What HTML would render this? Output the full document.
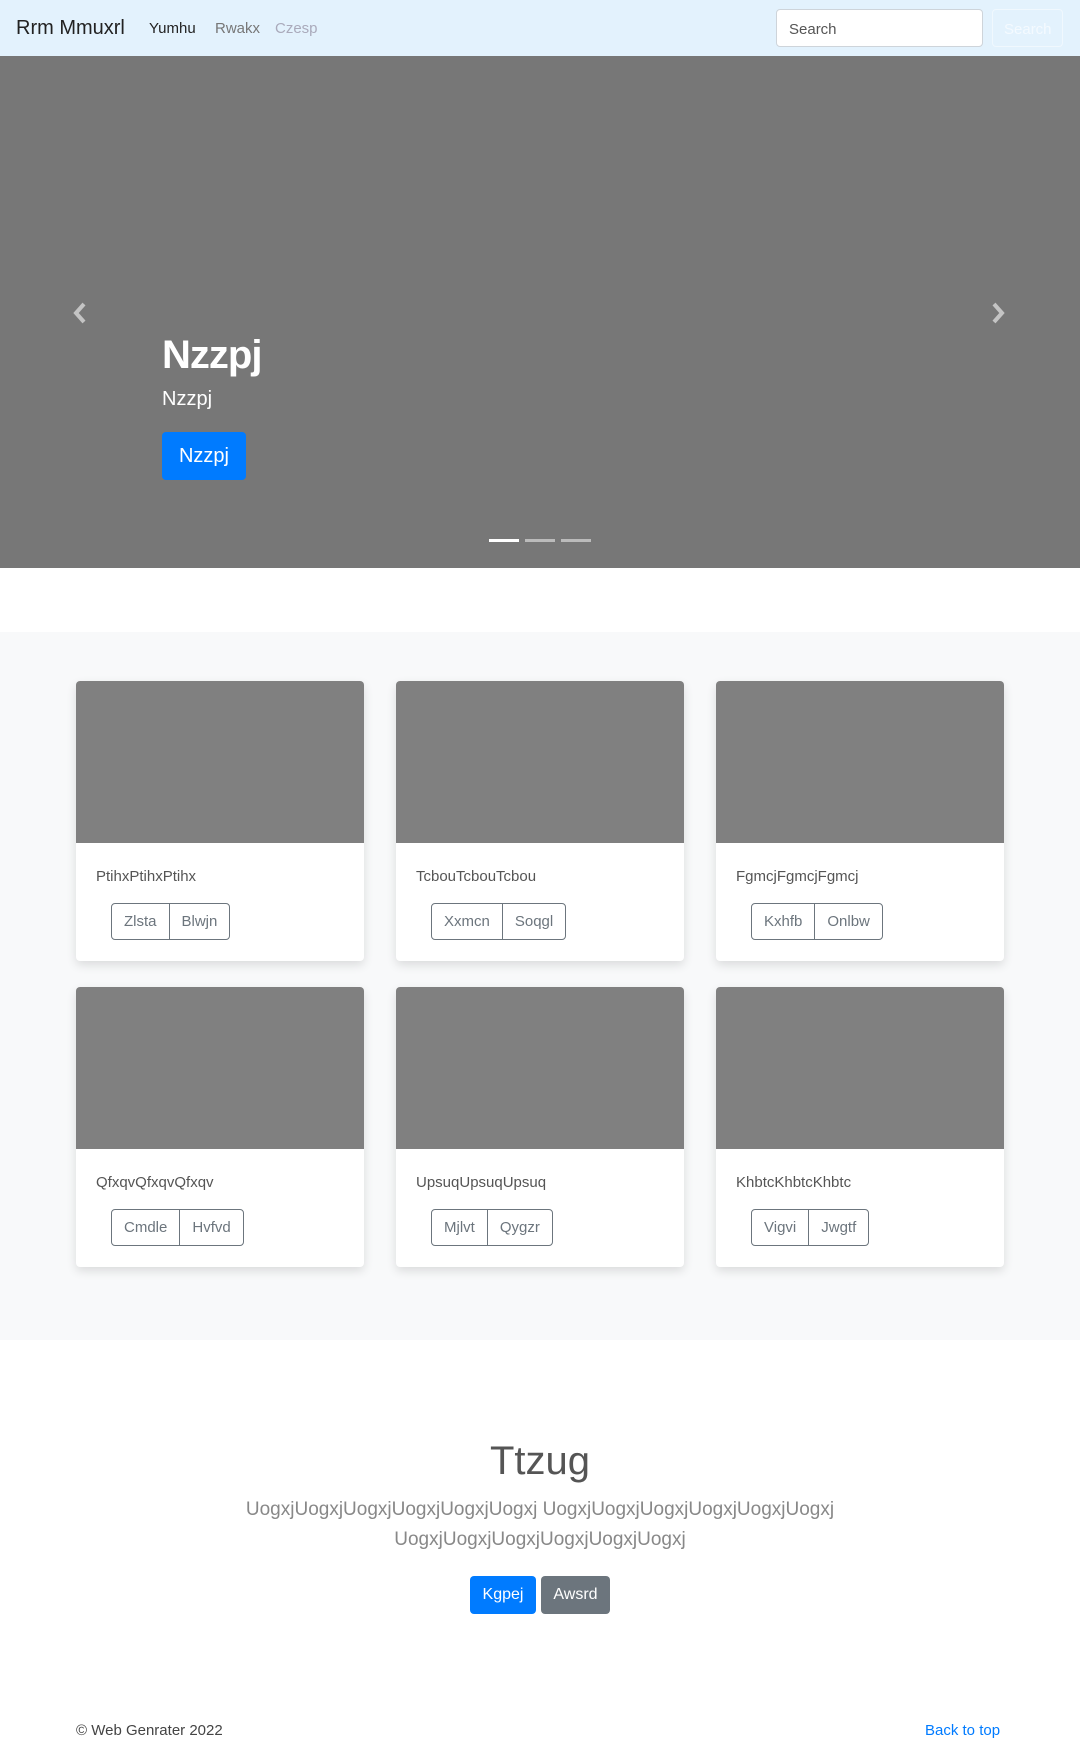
<!DOCTYPE html>
<html><head><meta charset="utf-8"><style>
*{box-sizing:border-box;margin:0;padding:0}
body{width:1080px;height:1742px;position:relative;font-family:"Liberation Sans",sans-serif;background:#fff;color:#212529;overflow:hidden}
.a{position:absolute}
.nav{left:0;top:0;width:1080px;height:56px;background:#e3f2fd}
.hero{left:0;top:56px;width:1080px;height:512px;background:#777}
.sec{left:0;top:632px;width:1080px;height:708px;background:#f8f9fa}
.card{width:288px;height:280px;background:#fff;border-radius:4px;box-shadow:0 4px 10px rgba(0,0,0,.12);overflow:hidden}
.card .img{height:162px;background:#808080}
.card .t{position:absolute;left:20px;top:187px;font-size:15px;color:#555}
.bg{position:absolute;left:35px;top:222px;display:flex;border:1px solid #6c757d;border-radius:4px;height:37px}
.bg span{padding:0 12px;font-size:15px;color:#6c757d;line-height:35px}
.bg span+span{border-left:1px solid #6c757d}
.btn{border-radius:4px;color:#fff;text-align:center}
</style></head><body>
<div class="a nav">
<div class="a" style="left:16px;top:17px;font-size:20px;color:#222">Rrm Mmuxrl</div>
<div class="a" style="left:149px;top:20px;font-size:15px;color:#222">Yumhu</div>
<div class="a" style="left:215px;top:20px;font-size:15px;color:#777">Rwakx</div>
<div class="a" style="left:275px;top:20px;font-size:15px;color:#aab">Czesp</div>
<div class="a" style="left:776px;top:9px;width:207px;height:38px;background:#fff;border:1px solid #ced4da;border-radius:4px;font-size:15px;color:#555;padding:11px 12px">Search</div>
<div class="a" style="left:992px;top:9px;width:71px;height:38px;border:1px solid #f0f8fe;border-radius:4px;font-size:15px;color:#f4faff;padding:11px 11px">Search</div>
</div>
<div class="a hero">
<svg class="a" style="left:72px;top:246px" width="16" height="22" viewBox="0 0 16 22"><path d="M12 2 L4 11 L12 20" stroke="#c4c4c4" stroke-width="4" fill="none"/></svg>
<svg class="a" style="left:990px;top:246px" width="16" height="22" viewBox="0 0 16 22"><path d="M4 2 L12 11 L4 20" stroke="#c4c4c4" stroke-width="4" fill="none"/></svg>
<div class="a" style="left:162px;top:277px;font-size:40px;font-weight:bold;color:#fff;letter-spacing:-1px">Nzzpj</div>
<div class="a" style="left:162px;top:332px;font-size:20px;color:#fff">Nzzpj</div>
<div class="a btn" style="left:162px;top:376px;width:84px;height:48px;background:#007bff;font-size:20px;line-height:48px">Nzzpj</div>
<div class="a" style="left:489px;top:483px;width:30px;height:3px;background:#fff"></div>
<div class="a" style="left:525px;top:483px;width:30px;height:3px;background:#bbb"></div>
<div class="a" style="left:561px;top:483px;width:30px;height:3px;background:#bbb"></div>
</div>
<div class="a sec"></div>
<div class="a card" style="left:76px;top:681px"><div class="img"></div><div class="t">PtihxPtihxPtihx</div><div class="bg"><span>Zlsta</span><span>Blwjn</span></div></div>
<div class="a card" style="left:396px;top:681px"><div class="img"></div><div class="t">TcbouTcbouTcbou</div><div class="bg"><span>Xxmcn</span><span>Soqgl</span></div></div>
<div class="a card" style="left:716px;top:681px"><div class="img"></div><div class="t">FgmcjFgmcjFgmcj</div><div class="bg"><span>Kxhfb</span><span>Onlbw</span></div></div>
<div class="a card" style="left:76px;top:987px"><div class="img"></div><div class="t">QfxqvQfxqvQfxqv</div><div class="bg"><span>Cmdle</span><span>Hvfvd</span></div></div>
<div class="a card" style="left:396px;top:987px"><div class="img"></div><div class="t">UpsuqUpsuqUpsuq</div><div class="bg"><span>Mjlvt</span><span>Qygzr</span></div></div>
<div class="a card" style="left:716px;top:987px"><div class="img"></div><div class="t">KhbtcKhbtcKhbtc</div><div class="bg"><span>Vigvi</span><span>Jwgtf</span></div></div>
<div class="a" style="left:0;top:1439px;width:1080px;text-align:center;font-size:40px;font-weight:300;color:#555">Ttzug</div>
<div class="a" style="left:240px;top:1495px;width:600px;text-align:center;font-size:19px;line-height:30px;color:#888;font-weight:300">UogxjUogxjUogxjUogxjUogxjUogxj UogxjUogxjUogxjUogxjUogxjUogxj UogxjUogxjUogxjUogxjUogxjUogxj</div>
<div class="a btn" style="left:470px;top:1576px;width:66px;height:38px;background:#007bff;font-size:16px;line-height:38px">Kgpej</div>
<div class="a btn" style="left:541px;top:1576px;width:69px;height:38px;background:#6c757d;font-size:16px;line-height:38px">Awsrd</div>
<div class="a" style="left:76px;top:1722px;font-size:15px;color:#444">© Web Genrater 2022</div>
<div class="a" style="left:925px;top:1722px;font-size:15px;color:#007bff">Back to top</div>
</body></html>
